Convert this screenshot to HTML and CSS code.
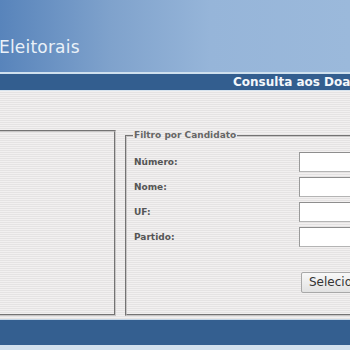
FILE: index.html
```html
<!DOCTYPE html>
<html lang="pt-BR">
<head>
<meta charset="utf-8">
<title>Consulta aos Doadores</title>
<link rel="stylesheet" href="styles.css">
</head>
<body>
<div class="page">
  <header class="header">
    <div class="site-title">Eleitorais</div>
  </header>
  <div class="rule-light"></div>
  <div class="titlebar">Consulta aos Doadores e Fornecedores de Campanha</div>
  <div class="rule-thin"></div>
  <main class="content">
    <fieldset class="box box-left"></fieldset>
    <fieldset class="box box-right">
      <legend class="legend">Filtro por Candidato</legend>
      <div class="form">
        <div class="row"><label class="lbl">Número:</label><input class="field" type="text"></div>
        <div class="row"><label class="lbl">Nome:</label><input class="field" type="text"></div>
        <div class="row"><label class="lbl">UF:</label><input class="field" type="text"></div>
        <div class="row"><label class="lbl">Partido:</label><input class="field" type="text"></div>
        <div class="actions"><button class="btn" type="button">Selecionar</button></div>
      </div>
    </fieldset>
  </main>
  <div class="rule-foot"></div>
  <footer class="footer"></footer>
  <div class="foot-under"></div>
</div>
</body>
</html>
```
FILE: styles.css
```css
html, body {
  margin: 0;
  padding: 0;
  overflow: hidden;
  background: #f0eeee;
}
.page {
  width: 720px;
  font-family: "DejaVu Sans", Verdana, sans-serif;
}
.header {
  height: 72px;
  background: linear-gradient(90deg, #5884bb 0px, #7fa2cc 110px, #96b5d9 210px, #9bb9db 350px);
  box-sizing: border-box;
  padding-top: 36px;
}
.site-title {
  font-size: 17px;
  color: #eaf1f8;
  line-height: 22px;
  letter-spacing: 0.2px;
  margin-left: -1px;
}
.rule-light {
  height: 2px;
  background: #cfe0ee;
}
.titlebar {
  height: 16px;
  line-height: 16px;
  background: #335e8f;
  color: #f4f7fb;
  font-weight: bold;
  font-size: 12px;
  padding-left: 233px;
  white-space: nowrap;
  overflow: hidden;
}
.rule-thin {
  height: 1px;
  background: #d6e3ee;
}
.content {
  display: flex;
  gap: 9px;
  margin-left: -100px;
  padding: 39px 0 3px;
  background: repeating-linear-gradient(180deg, #f2f0f0 0px, #f2f0f0 1px, #e5e3e3 1px, #e5e3e3 2px);
}
.box {
  margin: 0;
  border: 2px groove #c8c6c6;
  box-sizing: border-box;
  height: 186px;
  min-width: 0;
}
.box-left {
  width: 216px;
  padding: 0;
}
.box-right {
  width: 460px;
  padding: 0 0 0 7px;
}
.legend {
  font-size: 9px;
  font-weight: bold;
  color: #666;
  padding: 0 1px;
  margin-left: -1px;
  line-height: 11px;
}
.form {
  padding-top: 11px;
}
.row {
  display: flex;
  align-items: center;
  height: 20px;
  margin-bottom: 5px;
}
.lbl {
  width: 165px;
  font-size: 9px;
  font-weight: bold;
  color: #555;
}
.field {
  box-sizing: border-box;
  width: 200px;
  height: 20px;
  margin: 0;
  border: 1px solid #b4b4b4;
  border-top-color: #8e8e8e;
  border-left-color: #9a9a9a;
  background: #fff;
}
.actions {
  padding-left: 167px;
  margin-top: 24px;
}
.btn {
  height: 21px;
  padding: 0 7px;
  font-family: "DejaVu Sans", Verdana, sans-serif;
  font-size: 12px;
  color: #333;
  background: linear-gradient(180deg, #f8f8f8, #e2e2e2);
  border: 1px solid #a8a8a8;
  border-radius: 2px;
}
.rule-foot {
  height: 1px;
  background: #c3d5e6;
}
.footer {
  height: 25px;
  background: #345f90;
}
.foot-under {
  height: 10px;
  background: #d3e1ee;
}
```
